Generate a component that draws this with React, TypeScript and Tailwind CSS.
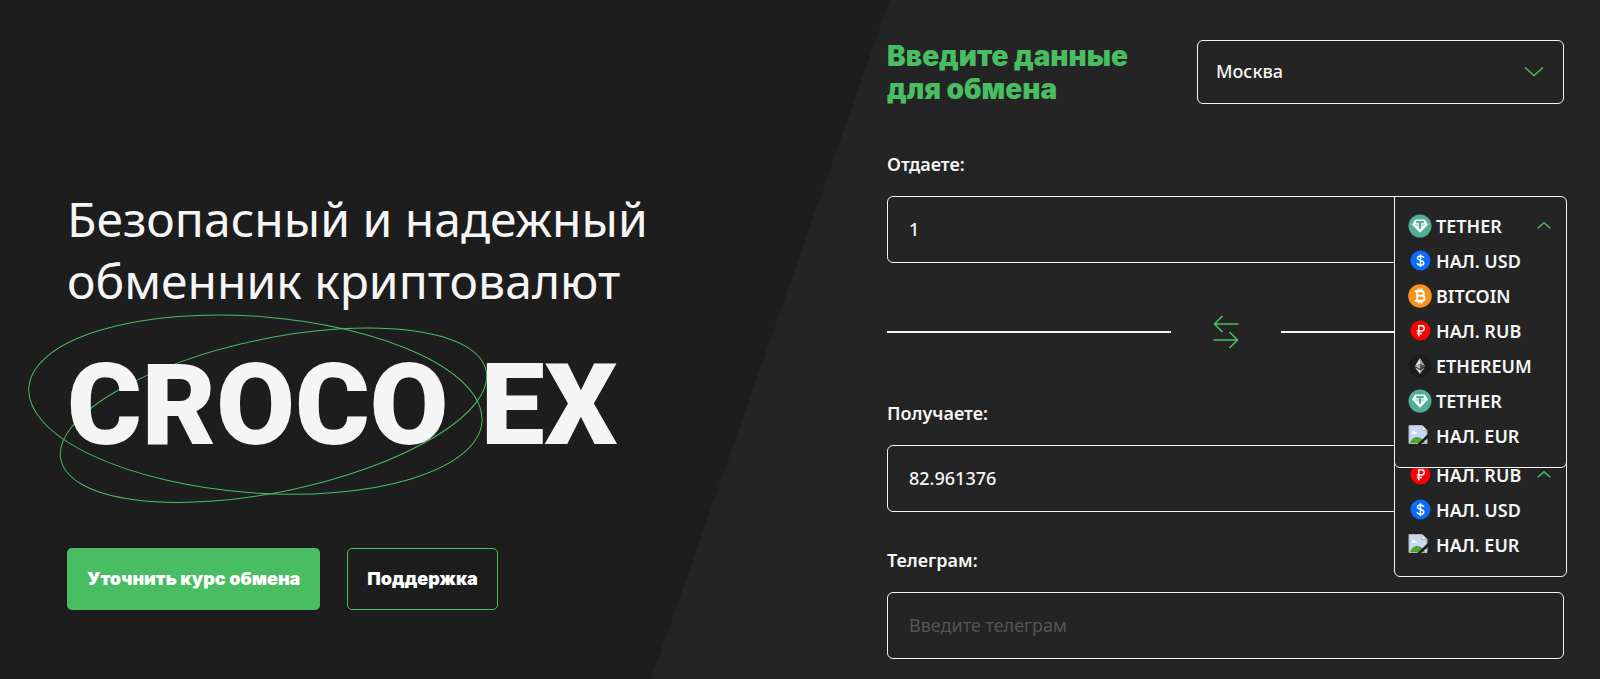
import React from 'react';

type CoinKind = 'tether' | 'usd' | 'bitcoin' | 'rub' | 'ethereum' | 'broken';

type Currency = {
  id: string;
  name: string;
  coin: CoinKind;
};

const giveCurrencies: Currency[] = [
  { id: 'usdt-trc', name: 'TETHER', coin: 'tether' },
  { id: 'usd', name: 'НАЛ. USD', coin: 'usd' },
  { id: 'btc', name: 'BITCOIN', coin: 'bitcoin' },
  { id: 'rub', name: 'НАЛ. RUB', coin: 'rub' },
  { id: 'eth', name: 'ETHEREUM', coin: 'ethereum' },
  { id: 'usdt-erc', name: 'TETHER', coin: 'tether' },
  { id: 'eur', name: 'НАЛ. EUR', coin: 'broken' },
];

const getCurrencies: Currency[] = [
  { id: 'rub', name: 'НАЛ. RUB', coin: 'rub' },
  { id: 'usd', name: 'НАЛ. USD', coin: 'usd' },
  { id: 'eur', name: 'НАЛ. EUR', coin: 'broken' },
];

const CoinIcon: React.FC<{ kind: CoinKind }> = ({ kind }) => {
  switch (kind) {
    case 'tether':
      return (
        <svg viewBox="0 0 24 24" className="size-6 shrink-0" aria-hidden="true">
          <circle cx="12" cy="12" r="11.5" fill="#50af95" />
          <path d="M7.2 5.4h9.6l3.2 5.2-8 8.2-8-8.2z" fill="#fff" />
          <path d="M8.2 7h7.6v1.9h-2.7v5.8h-2.2V8.900H8.2z" fill="#50af95" />
          <ellipse cx="12" cy="10.9" rx="4.6" ry="1" fill="none" stroke="#50af95" strokeWidth="0.6" />
        </svg>
      );
    case 'usd':
      return (
        <svg viewBox="0 0 24 24" className="size-6 shrink-0" aria-hidden="true">
          <circle cx="12.5" cy="11.5" r="10" fill="#0b6cff" />
          <path
            d="M15.6 9c-.2-1.4-1.4-2.1-3.1-2.1-1.8 0-3 .8-3 2.2 0 3.2 6.3 1.6 6.3 4.9 0 1.5-1.3 2.3-3.2 2.3-1.9 0-3.2-.8-3.4-2.4M12.5 5.200v12.800"
            fill="none"
            stroke="#fff"
            strokeWidth="1.5"
          />
        </svg>
      );
    case 'bitcoin':
      return (
        <svg viewBox="0 0 24 24" className="size-6 shrink-0" aria-hidden="true">
          <circle cx="12" cy="12" r="11.8" fill="#f7931a" />
          <path
            d="M6.8 7.2h6.6c3.2 0 3.2 4.5 0 4.5h-4h4.500c3.700 0 3.700 5.100 0 5.100H6.800M9.200 7.200v9.600M10.700 4.400v2.800M13.500 4.400v2.800M10.700 16.800v2.800M13.500 16.800v2.800"
            fill="none"
            stroke="#fff"
            strokeWidth="2"
          />
        </svg>
      );
    case 'rub':
      return (
        <svg viewBox="0 0 24 24" className="size-6 shrink-0" aria-hidden="true">
          <circle cx="12.5" cy="11.5" r="10" fill="#fe0000" />
          <path
            d="M10.8 17.5V6.7h2.7c3.6 0 3.6 5.2 0 5.2H8.800M8.800 14.500h5.200"
            fill="none"
            stroke="#fff"
            strokeWidth="1.5"
          />
        </svg>
      );
    case 'ethereum':
      return (
        <svg viewBox="0 0 24 24" className="size-6 shrink-0" aria-hidden="true">
          <circle cx="12" cy="12" r="11.5" fill="#1b1b1b" />
          <path d="M12 4 6.9 12.2 12 9.9z" fill="#e0e0e0" />
          <path d="M12 4l5.1 8.2L12 9.9z" fill="#a0a0a0" />
          <path d="M12 9.9l-5.1 2.3 5.1 3z" fill="#b0b0b0" />
          <path d="M12 9.9l5.1 2.3-5.1 3z" fill="#5a5a5a" />
          <path d="M6.9 13.2l5.1 3V20z" fill="#e0e0e0" />
          <path d="M17.1 13.2l-5.1 3V20z" fill="#a0a0a0" />
        </svg>
      );
    default:
      return (
        <svg viewBox="0 0 24 24" className="size-6 shrink-0" aria-hidden="true">
          <path d="M1 1.500h13l5 5v13H1z" fill="#c6d8f6" stroke="#b5b5b5" />
          <path d="M4 9c0-2 2.5-2.6 3.200-1 1.800-.4 2.300 1.900.8 1.900H4z" fill="#fff" />
          <path d="M2 19c2-6.500 9-8 13-3l2 3z" fill="#4ea72e" />
          <path d="M14 1.500v5h5z" fill="#f4f4f4" stroke="#b5b5b5" />
          <path d="M20 10 9 20.500h3.500L20 14z" fill="#1d1d1d" />
        </svg>
      );
  }
};

const Chevron: React.FC<{ className: string; up?: boolean }> = ({ className, up = false }) => (
  <svg viewBox="0 0 20 10" className={className} fill="none" stroke="#48bd62" aria-hidden="true">
    <path d={up ? 'M1 9l9-8 9 8' : 'M1 1l9 8 9-8'} strokeWidth="1.5" vectorEffect="non-scaling-stroke" />
  </svg>
);

type CurrencyMenuProps = {
  label: string;
  items: Currency[];
  className: string;
};

const CurrencyMenu: React.FC<CurrencyMenuProps> = ({ label, items, className }) => (
  <ul
    aria-label={label}
    className={`absolute -top-px -right-1 w-[173px] rounded-md rounded-tl-none border border-[#f5f5f5] bg-[#242424] pt-[11px] pb-[14px] ${className}`}
  >
    {items.map((item, index) => (
      <li key={item.id}>
        <button
          type="button"
          className="flex h-[35px] w-full items-center gap-1 pl-[13px] pr-[15px] text-lg font-semibold"
        >
          <CoinIcon kind={item.coin} />
          <span className="flex-1 whitespace-nowrap text-left">{item.name}</span>
          {index === 0 && <Chevron className="h-[7px] w-[14px]" up />}
        </button>
      </li>
    ))}
  </ul>
);

type AmountFieldProps = {
  id: string;
  label: string;
  value: string;
  items: Currency[];
  menuClassName: string;
};

const AmountField: React.FC<AmountFieldProps> = ({ id, label, value, items, menuClassName }) => (
  <div>
    <label htmlFor={id} className="block text-lg leading-6 font-semibold">
      {label}
    </label>
    <div className="relative mt-5 flex h-[67px] rounded-md border border-[#f5f5f5]">
      <input
        id={id}
        defaultValue={value}
        className="w-full rounded-md bg-transparent pl-[21px] pr-48 pb-0.5 text-lg font-medium outline-none"
      />
      <CurrencyMenu label={`${label} валюта`} items={items} className={menuClassName} />
    </div>
  </div>
);

const Hero: React.FC = () => (
  <section className="flex w-[55%] flex-col pl-[67px] pt-[188px]">
    <h1 className="text-[#f5f5f5]">
      <span className="block text-5xl leading-[62px]">
        Безопасный и надежный
        <br />
        обменник криптовалют
      </span>
      <span className="relative mt-[18px] block h-[150px] font-['Roboto'] text-[114px] leading-[150px] font-black">
        <svg
          viewBox="0 0 470 200"
          className="absolute -left-[43px] -top-[20px] h-[200px] w-[470px] max-w-none"
          fill="none"
          stroke="#48bd62"
          aria-hidden="true"
        >
          <ellipse cx="231.4" cy="94.6" rx="227.2" ry="88.2" transform="rotate(4.33 231.4 94.6)" />
          <ellipse cx="249.5" cy="105.2" rx="217.2" ry="76.6" transform="rotate(-11.84 249.5 105.2)" />
        </svg>
        <span className="relative whitespace-nowrap">
          CROCO <span className="ml-1">EX</span>
        </span>
      </span>
    </h1>
    <div className="mt-[68px] flex gap-[27px] font-['Inter'] text-lg font-black text-white">
      <button type="button" className="h-[62px] rounded-[5px] bg-[#48bd62] px-5">
        Уточнить курс обмена
      </button>
      <button type="button" className="h-[62px] rounded-[5px] border border-[#48bd62] px-[19px]">
        Поддержка
      </button>
    </div>
  </section>
);

const ExchangeForm: React.FC = () => (
  <form className="ml-auto mr-9 w-[677px] pt-10 pb-5">
    <div className="flex items-start justify-between">
      <h2 className="font-['Inter'] text-[28px] leading-[33px] font-black text-[#48bd62]">
        Введите данные
        <br />
        для обмена
      </h2>
      <div className="relative w-[367px]">
        <select
          aria-label="Город"
          className="h-16 w-full appearance-none rounded-md border border-[#f5f5f5] bg-transparent px-[18px] pb-0.5 text-lg font-medium"
        >
          <option>Москва</option>
        </select>
        <Chevron className="pointer-events-none absolute right-5 top-[26px] h-[11px] w-5" />
      </div>
    </div>

    <div className="mt-[46px]">
      <AmountField id="give" label="Отдаете:" value="1" items={giveCurrencies} menuClassName="z-20" />
    </div>

    <div className="mt-[52px] flex items-center">
      <span className="h-[2px] flex-1 bg-[#f5f5f5]" />
      <button type="button" aria-label="Поменять местами" className="px-[42px]">
        <svg viewBox="0 0 26 34" className="h-[34px] w-[26px]" fill="none" stroke="#48bd62" strokeWidth="1.6">
          <path d="M25.5 9h-24M9.5 1l-8 8 8 8M.5 25h24M16.5 17l8 8-8 8" />
        </svg>
      </button>
      <span className="h-[2px] flex-1 bg-[#f5f5f5]" />
    </div>

    <div className="mt-[52px]">
      <AmountField id="get" label="Получаете:" value="82.961376" items={getCurrencies} menuClassName="z-10" />
    </div>

    <div className="mt-9">
      <label htmlFor="telegram" className="block text-lg leading-6 font-semibold">
        Телеграм:
      </label>
      <input
        id="telegram"
        placeholder="Введите телеграм"
        className="mt-5 h-[67px] w-full rounded-md border border-[#f5f5f5] bg-transparent px-[21px] pb-0.5 text-lg outline-none placeholder:text-[#555555]"
      />
    </div>
  </form>
);

export default function App() {
  return (
    <main className="relative flex min-h-screen overflow-hidden bg-[#1d1d1d] font-['Noto_Sans',sans-serif] text-[#f5f5f5]">
      <div className="absolute inset-0 bg-[#242424] [clip-path:polygon(55.6%_0,100%_0,100%_100%,40.7%_100%)]" />
      <div className="relative flex w-full">
        <Hero />
        <ExchangeForm />
      </div>
    </main>
  );
}
